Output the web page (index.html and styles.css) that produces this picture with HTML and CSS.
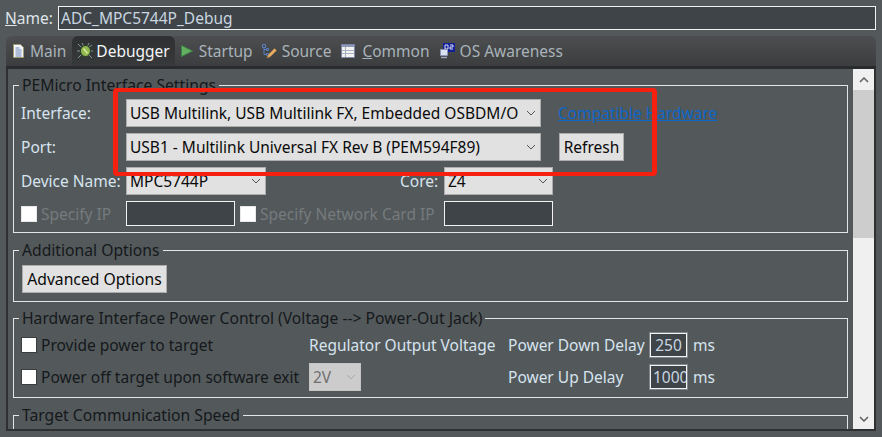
FILE: index.html
```html
<!DOCTYPE html>
<html lang="en">
<head>
<meta charset="utf-8">
<title>Debug configuration</title>
<link rel="stylesheet" href="styles.css">
</head>
<body>
<div class="page">
  <div class="name-row">
    <label class="name-label"><u>N</u>ame:</label>
    <div class="field name-field">ADC_MPC5744P_Debug</div>
  </div>
  <div class="folder">
    <div class="tabs">
      <div class="tab tab-main">
        <svg class="ico" viewBox="0 0 16 16"><path d="M1.500 1.500h7l3 3v10h-10z" fill="#f2f5fa" stroke="#a09a70"/><path d="M3.500 5h4M3.500 7h6M3.500 9h6M3.500 11h6M3.500 13h6" stroke="#6d88ba"/></svg>
        <span>Main</span>
      </div>
      <div class="tab active">
        <svg class="ico bug" viewBox="0 0 16 16"><path d="M1 1l4 4M15 2l-4 3M0 8h4M16 8h-4M1 15l4-4M15 15l-4-4M5 0l2 4M12 0l-2 4" stroke="#7d9a8c" stroke-width="1"/><ellipse cx="8.500" cy="8" rx="5" ry="5.500" fill="#93b84e" stroke="#24382a"/><path d="M6.500 5.500l4 5" stroke="#d4e8a0" stroke-width="1.500"/></svg>
        <span>Debugger</span>
      </div>
      <div class="tab tab-start">
        <svg class="ico" viewBox="0 0 16 16"><path d="M2.500 2.500l11 5.500-11 5.500z" fill="#63b060" stroke="#3f8446"/></svg>
        <span>Startup</span>
      </div>
      <div class="tab tab-src">
        <svg class="ico" viewBox="0 0 16 16"><path d="M1.500 1.500h3v3h-3zM5.500 5.500h2v2h-2zM5.500 10.500h2v2h-2zM3 4.500v7h2.500M3 6.500h2.500" fill="none" stroke="#5b7fc0"/><path d="M6 15l1.500-3.500 6-6 2 2-6 6z" fill="#e6ad62" stroke="#b08040" stroke-width=".6"/></svg>
        <span>Source</span>
      </div>
      <div class="tab tab-com">
        <svg class="ico" viewBox="0 0 16 16"><path d="M1.500 1.500h13v13h-13z" fill="#f2f2ee" stroke="#7d88a6"/><path d="M2 2h12v2H2z" fill="#8d9ab8"/><path d="M5.500 4v10M2 7.500h12M2 10.500h12" stroke="#a8b0c4"/></svg>
        <span><u>C</u>ommon</span>
      </div>
      <div class="tab tab-os">
        <svg class="ico" viewBox="0 0 16 16"><path d="M4 0h12v9H4z" fill="#14209a"/><path d="M6 2h3v4H6zM11 2h3v2h-3v2h3" stroke="#eef0ff" fill="none" stroke-width=".9"/><path d="M1.500 6.500h7v6h-7z" fill="#dbe3f2" stroke="#8a96b4"/><path d="M2 14.500h6" stroke="#9aa6c0" stroke-width="1.500"/></svg>
        <span>OS Awareness</span>
      </div>
    </div>
    <div class="body">
      <div class="content">
        <fieldset class="group g1">
          <legend>PEMicro Interface Settings</legend>
          <div class="row">
            <span class="lab">Interface:</span>
            <div class="select w-if"><span>USB Multilink, USB Multilink FX, Embedded OSBDM/O</span><svg class="chev" viewBox="0 0 10 6"><path d="M1 1l4 4 4-4" fill="none" stroke="#555"/></svg></div>
            <a class="link" href="#">Compatible Hardware</a>
          </div>
          <div class="row">
            <span class="lab">Port:</span>
            <div class="select w-if"><span>USB1 - Multilink Universal FX Rev B (PEM594F89)</span><svg class="chev" viewBox="0 0 10 6"><path d="M1 1l4 4 4-4" fill="none" stroke="#555"/></svg></div>
            <button class="btn refresh" type="button">Refresh</button>
          </div>
          <div class="row">
            <span class="lab">Device Name:</span>
            <div class="select w-dev"><span>MPC5744P</span><svg class="chev" viewBox="0 0 10 6"><path d="M1 1l4 4 4-4" fill="none" stroke="#555"/></svg></div>
            <span class="lab-core">Core:</span>
            <div class="select w-core"><span>Z4</span><svg class="chev" viewBox="0 0 10 6"><path d="M1 1l4 4 4-4" fill="none" stroke="#555"/></svg></div>
          </div>
          <div class="row row-ip">
            <span class="lab check-lab"><i class="box light"></i><span class="off">Specify IP</span></span>
            <div class="field ip"></div>
            <span class="check-net"><i class="box light"></i><span class="off">Specify Network Card IP</span></span>
            <div class="field ip"></div>
          </div>
        </fieldset>
        <fieldset class="group g2">
          <legend>Additional Options</legend>
          <button class="btn adv" type="button">Advanced Options</button>
        </fieldset>
        <fieldset class="group g3">
          <legend>Hardware Interface Power Control (Voltage --&gt; Power-Out Jack)</legend>
          <div class="power">
            <span class="check"><i class="box"></i><span class="dark">Provide power to target</span></span>
            <span class="lite">Regulator Output Voltage</span>
            <span class="lite">Power Down Delay</span>
            <div class="field num">250</div>
            <span class="lite">ms</span>
            <span class="check"><i class="box"></i><span class="dark">Power off target upon software exit</span></span>
            <div class="select w-v disabled"><span>2V</span><svg class="chev" viewBox="0 0 10 6"><path d="M1 1l4 4 4-4" fill="none" stroke="#aaa"/></svg></div>
            <span class="lite">Power Up Delay</span>
            <div class="field num clip">1000</div>
            <span class="lite">ms</span>
          </div>
        </fieldset>
        <fieldset class="group g4">
          <legend>Target Communication Speed</legend>
        </fieldset>
      </div>
      <div class="scroll">
        <div class="arrow"><svg viewBox="0 0 10 6"><path d="M1 5l4-4 4 4" fill="none" stroke="#606060" stroke-width="1.500"/></svg></div>
        <div class="thumb"></div>
        <div class="track"></div>
        <div class="arrow"><svg viewBox="0 0 10 6"><path d="M1 1l4 4 4-4" fill="none" stroke="#606060" stroke-width="1.500"/></svg></div>
      </div>
    </div>
  </div>
  <div class="annot"></div>
</div>
</body>
</html>
```
FILE: styles.css
```css
* { box-sizing: border-box; }
html, body { margin: 0; padding: 0; }
.page {
  position: relative;
  width: 882px;
  height: 437px;
  overflow: hidden;
  background: #53585a;
  font: 15.5px/20px "Noto Sans", sans-serif;
  color: #d6e4ef;
}
.name-row { display: flex; align-items: center; height: 36px; padding: 0 6px 0 5px; }
.name-label { width: 53px; color: #dfe6ea; }
.field {
  background: #3f4448;
  border: 1px solid #f2f2f2;
  color: #c9d6e0;
}
.name-field { flex: 1; height: 24px; padding-left: 2px; line-height: 22px; margin-top: -1px; }
.folder { margin: 0 6px; height: 395px; }
.tabs {
  display: flex;
  height: 33px;
  background: linear-gradient(#4c4e50, #3c3d3e);
  border-radius: 6px 6px 0 0;
  border-bottom: 3px solid #2a2b2c;
}
.tab {
  display: flex;
  align-items: center;
  gap: 2px;
  height: 30px;
  padding: 0 5px;
  color: #a9b3ba;
  white-space: nowrap;
}
.tab-main { padding: 0 6px; }
.tab.active {
  gap: 3px;
  background: linear-gradient(#2e3032, #38393b);
  color: #f4f6f8;
  border-radius: 6px 6px 0 0;
}
.tab-start { padding-left: 4px; gap: 4px; }
.tab-src { padding: 0 8px 0 3px; gap: 5px; }
.tab-com { padding: 0 8px 0 1px; gap: 6px; }
.tab-os { padding-left: 1px; gap: 5px; }
.ico { width: 16px; height: 16px; flex: none; }
.body {
  display: flex;
  height: 362px;
  border-left: 2px solid #2e3032;
  border-right: 2px solid #2e3032;
  border-bottom: 2px solid #2e3032;
}
.content { width: 845px; height: 360px; padding: 6px 5px 0; overflow: hidden; }
.group {
  margin: 0;
  padding: 0;
  border: 1px solid #e4e6e6;
  width: 835px;
  min-width: 0;
}
.group legend {
  margin-left: 5px;
  padding: 0 3px;
  color: #15191c;
  font-size: 15.7px;
  line-height: 20px;
}
.g1 { height: 158px; padding-top: 4px; }
.g2 { height: 62px; margin-top: 7px; padding-top: 5px; }
.g3 { height: 90px; margin-top: 6px; }
.g4 { height: 40px; margin-top: 7px; }
.row { display: flex; align-items: center; height: 28px; margin: 0 0 6px 7px; }
.lab { width: 105px; flex: none; white-space: nowrap; }
.select {
  display: flex;
  align-items: center;
  justify-content: space-between;
  height: 28px;
  flex: none;
  padding: 0 4px 0 3px;
  background: #e1e1e1;
  border: 1px solid #adadad;
  color: #0a0a0a;
  white-space: nowrap;
  overflow: hidden;
}
.chev { width: 10px; height: 6px; flex: none; }
.w-if { width: 415px; }
.w-dev { width: 140px; }
.w-core { width: 109px; }
.w-v { width: 52px; }
.link { margin-left: 17px; color: #0a66c8; white-space: nowrap; }
.btn {
  height: 28px;
  background: #e1e1e1;
  border: 1px solid #adadad;
  border-radius: 0;
  color: #0a0a0a;
  font: inherit;
  padding: 0;
}
.refresh { width: 65px; margin-left: 18px; }
.adv { width: 145px; display: block; margin-left: 8px; font-size: 15.7px; }
.lab-core { width: 178px; flex: none; padding-left: 134px; }
.row-ip { height: 25px; margin-bottom: 0; }
.check-lab, .check, .check-net { display: flex; align-items: center; gap: 4px; white-space: nowrap; }
.check-net { width: 209px; padding-left: 5px; flex: none; }
.box {
  display: block;
  width: 16px;
  height: 16px;
  flex: none;
  background: #fff;
  border: 1px solid #3a3d40;
}
.box.light { border-color: #e8e8e8; }
.off { color: #757b7e; }
.dark { color: #15191c; }
.ip { width: 109px; height: 25px; }
.power {
  display: grid;
  grid-template-columns: 288px 199px 142px 43px auto;
  grid-auto-rows: 32px;
  align-items: center;
  padding: 1px 0 0 7px;
}
.lite { color: #d6e4ef; white-space: nowrap; }
.num {
  width: 37px;
  height: 24px;
  padding: 0;
  line-height: 22px;
  border-color: #f2f2f2;
  outline: 1px solid #80868a;
  overflow: hidden;
  white-space: nowrap;
  text-align: center;
}
.clip { text-align: left; padding-left: 2px; }
.disabled { background: #cccccc; border-color: #c4c4c4; color: #6f6f6f; }
.scroll { width: 21px; height: 360px; display: flex; flex-direction: column; background: #f0f0f0; }
.arrow { height: 21px; flex: none; display: flex; align-items: center; justify-content: center; }
.arrow svg { width: 10px; height: 6px; }
.thumb { height: 148px; flex: none; background: #cdcdcd; }
.track { flex: 1; }
.annot {
  position: absolute;
  left: 113px;
  top: 88px;
  width: 544px;
  height: 88px;
  border: 4px solid #f5200f;
  border-left-width: 5px;
  border-right-width: 5px;
  border-radius: 4px;
}
```
